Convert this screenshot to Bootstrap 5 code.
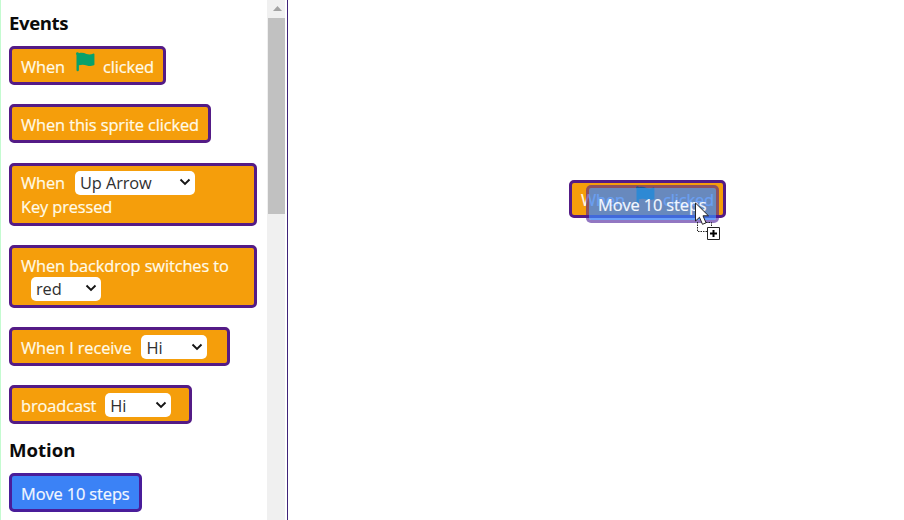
<!DOCTYPE html>
<html lang="en">
<head>
<meta charset="utf-8">
<meta name="viewport" content="width=device-width, initial-scale=1">
<title>Block editor</title>
<link href="https://cdn.jsdelivr.net/npm/bootstrap@5.3.0/dist/css/bootstrap.min.css" rel="stylesheet">
<style>
body{font-family:"Open Sans","Noto Sans",sans-serif;font-size:16.4px;line-height:24px;letter-spacing:-.11px;color:#111;background:#fff}
.editor{height:520px}
.palette{width:267px;padding:11px 10px 0 8px;border-left:1px solid #c4fbd0}
.heading{font-size:18.6px;line-height:24px;font-weight:700;letter-spacing:-.4px;margin:0 0 11px;color:#0b0b0b}
.heading.motion{margin-top:14px;letter-spacing:0}
.block{width:max-content;height:39px;border:3px solid #541b86;border-radius:5px;background:#f59e0b;color:#fffbe8;padding:2px 9px 0;white-space:nowrap;-webkit-text-stroke:.2px}
.block + .block{margin-top:19.3px}
.block.tall{height:63px;width:248px}
.w1{width:157px}.w2{width:202px}.w5{width:221px}.w6{width:183px}.w7{width:133px}
.block.blue{background:#3b82f6;color:#f3f8ff;border-color:#4a1d9a}
.picker{height:24px;margin-top:-1px;border-radius:5px;background:#fff;color:#303030;padding:1px 4px 0 5px;-webkit-text-stroke:0}
.picker svg{margin-top:-2px}
.flag{width:20px;height:20px;margin:-9px 8px 0 10px}
.rail{width:18px;background:#f0f0f0}
.rail-thumb{height:196px;background:#c1c1c1;margin-left:1px}
.canvas{border-left:1px solid #3f2379;margin-left:2px}
.placed{left:569px;top:180px;height:38px}
.block.ghost{left:586px;top:185px;height:38px;padding-top:2px;background:rgba(59,130,246,.76);border-color:rgba(74,29,154,.6);background-clip:padding-box}
.pointer{left:694px;top:202px}
</style>
<script src="https://cdn.jsdelivr.net/npm/bootstrap@5.3.0/dist/js/bootstrap.bundle.min.js"></script>
</head>
<body class="overflow-hidden">
<svg width="0" height="0" class="position-absolute"><defs>
<symbol id="flag" viewBox="0 0 20 20"><path fill="#08a16b" d="M1 1.5a1.6 1.6 0 0 1 3-.3C7 .3 9 1 11.500 1.900c2.500.8 4.500.6 7.200-.4.500-.1.800.2.800.7v10.300c0 .4-.2.600-.6.800-2.300.9-4.400 1-7 .2-2.800-.9-4.900-1-8-.2V18a1.200 1.200 0 0 1-2.400 0V3A2 2 0 0 1 1 1.500Z"/></symbol>
<symbol id="chev" viewBox="0 0 12 8"><path d="m1.500 1.500 4.500 4.500 4.500-4.500" fill="none" stroke="#151515" stroke-width="1.9"/></symbol>
</defs></svg>
<main class="editor d-flex position-relative">
<aside class="palette flex-shrink-0 overflow-hidden">
<h2 class="heading">Events</h2>
<div class="block w1 d-flex align-items-center"><span>When</span><svg class="flag"><use href="#flag"/></svg><span>clicked</span></div>
<div class="block w2 d-flex align-items-center"><span>When this sprite clicked</span></div>
<div class="block tall d-flex flex-column justify-content-center">
<div class="d-flex align-items-center"><span>When</span><span class="picker d-flex align-items-center justify-content-between" style="width:120px;margin-left:10px"><span>Up Arrow</span><svg width="12" height="8"><use href="#chev"/></svg></span></div>
<span>Key pressed</span></div>
<div class="block tall d-flex flex-column justify-content-center">
<span>When backdrop switches to</span>
<span class="picker d-flex align-items-center justify-content-between" style="width:70px;margin-left:10px"><span>red</span><svg width="12" height="8"><use href="#chev"/></svg></span></div>
<div class="block w5 d-flex align-items-center"><span>When I receive</span><span class="picker d-flex align-items-center justify-content-between" style="width:66px;margin-left:10px"><span>Hi</span><svg width="12" height="8"><use href="#chev"/></svg></span></div>
<div class="block w6 d-flex align-items-center"><span>broadcast</span><span class="picker d-flex align-items-center justify-content-between" style="width:66px;margin-left:9px"><span>Hi</span><svg width="12" height="8"><use href="#chev"/></svg></span></div>
<h2 class="heading motion">Motion</h2>
<div class="block blue w7 d-flex align-items-center"><span>Move 10 steps</span></div>
</aside>
<div class="rail flex-shrink-0"><svg class="d-block" width="18" height="18"><path d="m6 11 4.500-5 4.500 5Z" fill="#a3a3a3"/></svg><div class="rail-thumb"></div></div>
<section class="canvas flex-grow-1"></section>
<div class="block placed w1 d-flex align-items-center position-absolute"><span>When</span><svg class="flag"><use href="#flag"/></svg><span>clicked</span></div>
<div class="block blue ghost w7 m-0 d-flex align-items-center position-absolute"><span>Move 10 steps</span></div>
<svg class="pointer position-absolute" width="30" height="40"><path d="M3.500 20v9.500h10M12 20.500h5.500v5" fill="none" stroke="#222" stroke-dasharray="1.500 1"/><path d="M1.500 1v18l4-3.700 3 7 3.500-1.500-3-7h5.500Z" fill="#fff" stroke="#222"/><path d="M13.500 25.500h12v12h-12Z" fill="#fff" stroke="#222"/><path d="M19.500 28v7M16 31.500h7" stroke="#000" stroke-width="2"/></svg>
</main>
</body>
</html>
